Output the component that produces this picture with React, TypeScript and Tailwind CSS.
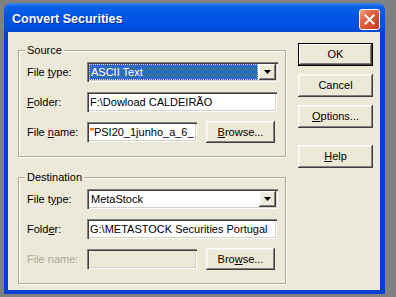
const face = "font-['Liberation_Sans',Arial,sans-serif]";

const raised =
  "bg-[#ece9d8] shadow-[inset_-1px_-1px_0_#404040,inset_1px_1px_0_#ffffff,inset_-2px_-2px_0_#808080,inset_2px_2px_0_#f4f3ee]";
const sunken =
  "shadow-[inset_1px_1px_0_#808080,inset_2px_2px_0_#404040,inset_-1px_-1px_0_#ffffff,inset_-2px_-2px_0_#d4d0c8]";

function U({ children }: { children: string }) {
  return <span className="underline underline-offset-[1px]">{children}</span>;
}

function Arrow() {
  return (
    <div className={"flex h-full w-[17px] items-center justify-center " + raised}>
      <svg width="7" height="4" viewBox="0 0 7 4">
        <polygon points="0,0 7,0 3.5,4" fill="#000" />
      </svg>
    </div>
  );
}

function Combo({ value, selected }: { value: string; selected?: boolean }) {
  return (
    <div className={"flex h-[20px] w-[191px] bg-white p-[2px] " + sunken}>
      <div className="flex-1 pr-[1px]">
        {selected ? (
          <div className="flex h-full items-center border border-dotted border-[#e8dc78] bg-[#316ac5] pl-[1px] text-white">
            {value}
          </div>
        ) : (
          <div className="flex h-full items-center pl-[2px]">{value}</div>
        )}
      </div>
      <Arrow />
    </div>
  );
}

function Field({
  value,
  width,
  disabled,
}: {
  value?: string;
  width: string;
  disabled?: boolean;
}) {
  return (
    <div
      className={
        "flex h-[20px] items-center overflow-hidden whitespace-nowrap pl-[3px] " +
        width +
        " " +
        (disabled ? "bg-[#ece9d8] " : "bg-white ") +
        sunken
      }
    >
      {value}
    </div>
  );
}

function Button({
  children,
  className = "",
  isDefault,
}: {
  children: React.ReactNode;
  className?: string;
  isDefault?: boolean;
}) {
  if (isDefault) {
    return (
      <div
        className={
          "flex items-center justify-center border border-black bg-[#ece9d8] shadow-[inset_-1px_-1px_0_#404040,inset_1px_1px_0_#ffffff,inset_-2px_-2px_0_#808080] " +
          className
        }
      >
        {children}
      </div>
    );
  }
  return (
    <div className={"flex items-center justify-center " + raised + " " + className}>
      {children}
    </div>
  );
}

function Row({
  label,
  children,
  dim,
}: {
  label: React.ReactNode;
  children: React.ReactNode;
  dim?: boolean;
}) {
  return (
    <div className="flex h-[20px] items-center">
      <span className={"w-[60px] " + (dim ? "text-[#aca899]" : "")}>{label}</span>
      {children}
    </div>
  );
}

function Group({
  title,
  children,
  className = "",
}: {
  title: string;
  children: React.ReactNode;
  className?: string;
}) {
  return (
    <div
      className={
        "relative h-[107px] w-[268px] border border-[#aca899] pl-[8px] pt-[11px] shadow-[inset_1px_1px_0_#ffffff,1px_1px_0_#ffffff] " +
        className
      }
    >
      <span className="absolute -top-[8px] left-[6px] bg-[#ece9d8] px-[2px] leading-[14px]">
        {title}
      </span>
      <div className="flex flex-col gap-[10px]">{children}</div>
    </div>
  );
}

export default function App() {
  return (
    <div className={"h-[297px] w-[396px] bg-[#7f8081] pl-[4px] pt-[3px] " + face}>
      <div className="flex h-[291px] w-[381px] flex-col rounded-t-[7px] bg-[linear-gradient(180deg,#3b86f5_0px,#0a5fe8_4px,#0055e5_14px,#0050e0_24px,#0846d2_29px,#0a3fd4_30px)]">
        {/* title bar */}
        <div className="flex h-[29px] shrink-0 items-start justify-between pl-[8px] pr-[5px]">
          <span className="mt-[9px] text-[12.5px] font-bold leading-[15px] text-white [text-shadow:1px_1px_0_#0a2a9a]">
            Convert Securities
          </span>
          <div className="mt-[6px] flex h-[21px] w-[21px] items-center justify-center rounded-[3px] border border-white bg-[linear-gradient(135deg,#f0a080_0%,#e06040_40%,#c83818_100%)]">
            <svg width="11" height="11" viewBox="0 0 11 11">
              <path d="M1.5 1.5 L9.5 9.5 M9.5 1.5 L1.5 9.5" stroke="#fff" strokeWidth="2" strokeLinecap="square" />
            </svg>
          </div>
        </div>

        {/* body */}
        <div className="mb-[4px] ml-[4px] mr-[5px] flex flex-1 bg-[#ece9d8] pl-[10px] pt-[11px] text-[11px] leading-[13px] text-black">
          <div className="pt-[7px]">
            <Group title="Source">
              <Row
                label={
                  <>
                    File <U>t</U>ype:
                  </>
                }
              >
                <Combo value="ASCII Text" selected />
              </Row>
              <Row
                label={
                  <>
                    <U>F</U>older:
                  </>
                }
              >
                <Field value="F:\Dowload CALDEIRÃO" width="w-[190px]" />
              </Row>
              <Row
                label={
                  <>
                    File <U>n</U>ame:
                  </>
                }
              >
                <Field value={'"PSI20_1junho_a_6_'} width="w-[110px]" />
                <Button className="ml-[9px] h-[22px] w-[69px]">
                  <span>
                    <U>B</U>rowse...
                  </span>
                </Button>
              </Row>
            </Group>

            <Group title="Destination" className="mt-[20px]">
              <Row
                label={
                  <>
                    File t<U>y</U>pe:
                  </>
                }
              >
                <Combo value="MetaStock" />
              </Row>
              <Row
                label={
                  <>
                    Fold<U>e</U>r:
                  </>
                }
              >
                <Field value="G:\METASTOCK Securities Portugal" width="w-[190px]" />
              </Row>
              <Row label="File name:" dim>
                <Field width="w-[110px]" disabled />
                <Button className="ml-[9px] h-[22px] w-[69px]">
                  <span>
                    Bro<U>w</U>se...
                  </span>
                </Button>
              </Row>
            </Group>
          </div>

          <div className="ml-[12px] flex w-[75px] flex-col gap-[8px]">
            <Button isDefault className="h-[23px] w-[75px]">
              OK
            </Button>
            <Button className="h-[23px] w-[75px]">Cancel</Button>
            <Button className="h-[23px] w-[75px]">
              <span>
                <U>O</U>ptions...
              </span>
            </Button>
            <Button className="mt-[9px] h-[23px] w-[75px]">
              <span>
                <U>H</U>elp
              </span>
            </Button>
          </div>
        </div>
      </div>
    </div>
  );
}
